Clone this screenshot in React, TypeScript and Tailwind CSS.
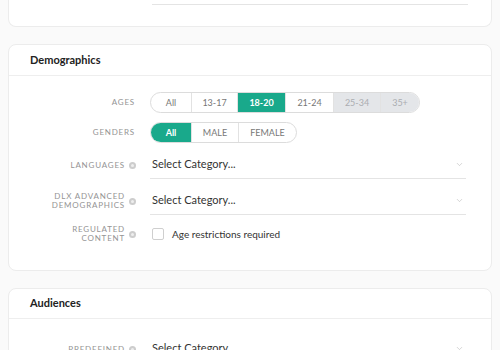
import { ChevronDown } from 'lucide-react';

const ages = [
  { label: 'All', w: 'w-[40px]', state: 'idle' },
  { label: '13-17', w: 'w-[46px]', state: 'idle' },
  { label: '18-20', w: 'w-[48px]', state: 'on' },
  { label: '21-24', w: 'w-[48px]', state: 'idle' },
  { label: '25-34', w: 'w-[47px]', state: 'off' },
  { label: '35+', w: 'w-[39px]', state: 'off' },
];

const genders = [
  { label: 'All', w: 'w-[40px]', state: 'on' },
  { label: 'MALE', w: 'w-[47px]', state: 'idle' },
  { label: 'FEMALE', w: 'w-[58px]', state: 'idle' },
];

function Info() {
  return (
    <span className="ml-[4px] w-[7px] h-[7px] rounded-full bg-[#cdcdcd] shrink-0 flex items-center justify-center">
      <span className="w-[3px] h-[3px] rounded-full bg-[#eeeeee]" />
    </span>
  );
}

function Label({ children, info }: { children: React.ReactNode; info?: boolean }) {
  return (
    <div className="w-[127px] shrink-0 flex items-center justify-end text-right text-[8px] leading-[9px] tracking-[0.1em] uppercase text-[#949494]">
      <span>{children}</span>
      {info ? <Info /> : <span className="w-[1px]" />}
    </div>
  );
}

function Segmented({ items }: { items: { label: string; w: string; state: string }[] }) {
  return (
    <div className="flex h-[21px] rounded-full border border-[#dcdcdc] overflow-hidden bg-white">
      {items.map((it, i) => (
        <div
          key={it.label}
          className={
            `${it.w} flex items-center justify-center text-[9px] ` +
            (i > 0 ? 'border-l border-[#e2e2e2] ' : '') +
            (it.state === 'on'
              ? 'bg-[#19a98b] text-white font-bold'
              : it.state === 'off'
              ? 'bg-[#e4e6e9] text-[#abadb1]'
              : 'text-[#777]')
          }
        >
          {it.label}
        </div>
      ))}
    </div>
  );
}

function Select() {
  return (
    <div className="w-[316px] h-[28px] flex items-center justify-between border-b border-[#e4e4e4] pl-[2px] pr-[2px]">
      <span className="text-[11px] text-[#333]">Select Category...</span>
      <ChevronDown className="w-[9px] h-[9px] text-[#b5b5b5]" strokeWidth={1.5} />
    </div>
  );
}

export default function App() {
  return (
    <div className="w-[500px] h-[350px] overflow-hidden bg-[#fafafa] px-[8px] font-['Lato','Noto_Sans',sans-serif]">
      {/* previous card tail */}
      <div className="h-[27px] bg-white border-x border-b border-[#ececec] rounded-b-[8px] pl-[143px]">
        <div className="w-[316px] h-[5px] border-b border-[#e4e4e4]" />
      </div>

      {/* Demographics */}
      <div className="mt-[17px] bg-white border border-[#ececec] rounded-[8px]">
        <div className="h-[31px] flex items-center pl-[21px] border-b border-[#eeeeee] text-[11px] font-bold text-[#222]">
          Demographics
        </div>
        <div className="pt-[16px] pb-[25px] flex flex-col">
          <div className="flex items-center gap-[14px]">
            <Label>Ages</Label>
            <Segmented items={ages} />
          </div>
          <div className="mt-[9px] flex items-center gap-[14px]">
            <Label>Genders</Label>
            <Segmented items={genders} />
          </div>
          <div className="mt-[8px] flex items-center gap-[14px]">
            <Label info>Languages</Label>
            <Select />
          </div>
          <div className="mt-[8px] flex items-center gap-[14px]">
            <Label info>
              DLX Advanced
              <br />
              Demographics
            </Label>
            <Select />
          </div>
          <div className="mt-[8px] h-[22px] flex items-center gap-[14px]">
            <Label info>
              Regulated
              <br />
              Content
            </Label>
            <div className="flex items-center pl-[2px]">
              <span className="w-[12px] h-[12px] rounded-[2px] border border-[#cfcfcf] bg-white" />
              <span className="ml-[8px] text-[10px] text-[#333]">Age restrictions required</span>
            </div>
          </div>
        </div>
      </div>

      {/* Audiences */}
      <div className="mt-[17px] bg-white border border-[#ececec] rounded-[8px]">
        <div className="h-[30px] flex items-center pl-[21px] border-b border-[#eeeeee] text-[11px] font-bold text-[#222]">
          Audiences
        </div>
        <div className="pt-[16px] pb-[20px] flex flex-col">
          <div className="flex items-center gap-[14px]">
            <Label info>Predefined</Label>
            <Select />
          </div>
        </div>
      </div>
    </div>
  );
}
